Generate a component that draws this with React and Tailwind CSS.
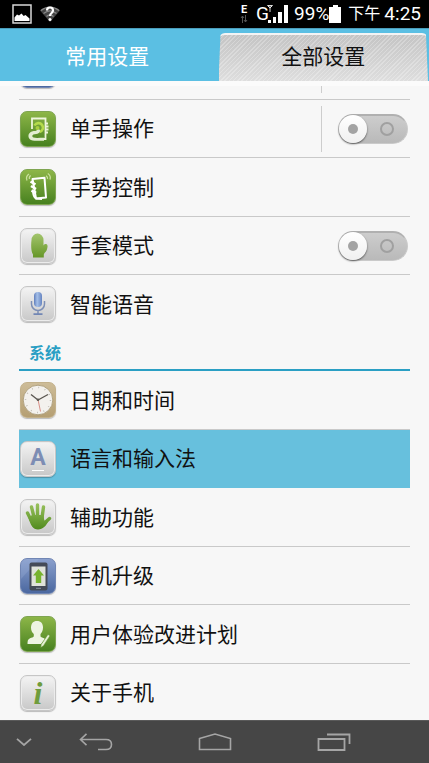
import { useState } from 'react';
import clsx from 'clsx';

const tiles = {
  green: 'bg-linear-to-b from-[#8db648] to-[#47811f] border-[#7fa552]',
  silver: 'bg-linear-to-b from-[#f4f4f4] to-[#c8c8c8] border-[#c6c6c6] inset-ring inset-ring-[#ececec]',
  gold: 'bg-linear-to-b from-[#cdbc98] to-[#b59f73] border-[#c3b18b]',
  blue: 'bg-linear-to-b from-[#8ba0cd] to-[#4b68a0] border-[#7186b4]',
};

function Tile({ tone, children }) {
  return (
    <span
      aria-hidden="true"
      className={clsx(
        'flex size-9 shrink-0 items-center justify-center overflow-hidden rounded-[7px] border shadow-[0_1px_1px_rgba(0,0,0,0.25)]',
        tiles[tone]
      )}
    >
      {children}
    </span>
  );
}

function OneHandIcon() {
  return (
    <svg viewBox="0 0 36 36" className="size-9 shrink-0" fill="none">
      <path d="M12 18V7.5h13.500V28H13" stroke="#eef5dc" strokeWidth="1.8" />
      <path d="M14.500 14.500a4.500 4.500 0 1 1 5 6.500" stroke="#b5db4c" strokeWidth="2.600" />
      <circle cx="17.500" cy="17" r="2" fill="#a9d03f" />
      <path
        d="M19.500 18.500c-1.500-.3-2.500.7-4 1.500-2.500 0-5 .6-6.300 2.500-1.500 2.200-.7 5.300 1.800 6.500 2.500 1 7.500.8 13 .8v-3c-4 0-8 .6-10.500-.2-1.500-.6-1.600-2.300-.2-3 1.700-.7 4-.3 5.500-1.600 1.200-1 1.700-2.600.7-3.500z"
        fill="#e3eed2"
      />
      <path d="M26 12.500h2M26 15.500h2.500M26 18.500h2.500M26 21.500h2" stroke="#eef5dc" strokeWidth="2" />
    </svg>
  );
}

function GestureIcon() {
  return (
    <svg viewBox="0 0 36 36" className="size-9 shrink-0" fill="none">
      <path d="m12.500 10 12-1.200 1.500 19.700-10 1z" stroke="#fff" strokeWidth="2" strokeLinejoin="round" />
      <path d="m10.500 12.500 5 3M11 17l5 3M11.500 21.500l4.500 2.500" stroke="#fff" strokeWidth="2.600" />
      <path d="M13 23c.5 3.500 1.500 5.500 3 6.500l6 .5" stroke="#fff" strokeWidth="2" />
      <path
        d="M9.500 10c-.5-1.500 0-2.700 1.200-3.500M7 11.500C6 9 6.700 6.500 9 5M27.500 10c.4-1.500-.2-2.500-1.500-3.300M30 10.500c.8-2.500 0-4.500-2.200-6"
        stroke="#c9e09c"
        strokeWidth="1.300"
      />
    </svg>
  );
}

function MittenIcon() {
  return (
    <svg viewBox="0 0 36 36" className="size-9 shrink-0">
      <defs>
        <linearGradient id="mitten" x1="0" y1="0" x2="0" y2="1">
          <stop offset="0" stopColor="#a3c56d" />
          <stop offset="1" stopColor="#669628" />
        </linearGradient>
      </defs>
      <path
        d="M11.500 12a6 6.500 0 0 1 12 0v5.500c.5-1.300 1.500-1.800 2.500-1.500 1.500.4 1.700 1.500 1.500 3-.4 2.600-1 4.500-3 6l-.7 1.500v3H13v-3l-1-2C11 21 11 16 11.500 12z"
        fill="url(#mitten)"
      />
    </svg>
  );
}

function MicIcon() {
  return (
    <svg viewBox="0 0 36 36" className="size-9 shrink-0" fill="none">
      <defs>
        <linearGradient id="mic" x1="0" y1="0" x2="1" y2="0">
          <stop offset="0" stopColor="#5f7dbb" />
          <stop offset="0.400" stopColor="#a4bfe8" />
          <stop offset="1" stopColor="#6684c0" />
        </linearGradient>
      </defs>
      <rect x="14" y="6" width="8" height="15" rx="4" fill="url(#mic)" />
      <path d="M11.500 15v3a6.500 6.500 0 0 0 13 0v-3M18 24.500V28" stroke="#7d8fb5" strokeWidth="1.500" />
      <path d="M13.500 28.200h9" stroke="#7186b4" strokeWidth="1.800" />
    </svg>
  );
}

function ClockIcon() {
  return (
    <svg viewBox="0 0 36 36" className="size-9 shrink-0" fill="none">
      <circle cx="18" cy="18" r="14.800" fill="#f3f1ed" stroke="#a5946e" strokeWidth="0.800" />
      <circle cx="18" cy="18" r="12.500" stroke="#b9b5ac" strokeWidth="1.500" strokeDasharray="0.800 5.745" />
      <path d="m20.500 29.500-2.500-12" stroke="#d4837a" strokeWidth="0.900" />
      <path d="m11 12.500 7 5.500 10-5.500" stroke="#5c5852" strokeWidth="1.400" />
      <circle cx="18" cy="17.800" r="1.300" fill="#5c5852" />
    </svg>
  );
}

function HandIcon() {
  return (
    <svg viewBox="0 0 36 36" className="size-9 shrink-0" fill="none">
      <defs>
        <linearGradient id="hand" gradientUnits="userSpaceOnUse" x1="0" y1="4" x2="0" y2="31">
          <stop offset="0" stopColor="#9bc35f" />
          <stop offset="1" stopColor="#4f8a1d" />
        </linearGradient>
      </defs>
      <path
        d="m7.500 14 3.500 7M11.500 8 14 18M17.500 6v12M23.500 8 22 19M29.500 19.500 24.500 24"
        stroke="url(#hand)"
        strokeWidth="3.400"
        strokeLinecap="round"
      />
      <path d="m8.500 19 3.500-3h11.500l.8 5.500 4 .8c-2.300 4.700-5.300 8.200-10.300 8.200s-7.500-4.500-9.500-11.500z" fill="url(#hand)" />
    </svg>
  );
}

function UpgradeIcon() {
  return (
    <svg viewBox="0 0 36 36" className="size-9 shrink-0">
      <path d="M0 0h20L0 22z" fill="#a0b3dc" opacity="0.300" />
      <rect x="9.500" y="4.500" width="18" height="28" rx="2" fill="#444a57" />
      <rect x="11.500" y="8.500" width="14" height="19.500" fill="#dfe2da" />
      <path d="M18.500 11 24 17.500h-2.800V25h-5.400v-7.500H13z" fill="#77b32f" />
      <path d="M16 30.300h5" stroke="#8a92a3" />
    </svg>
  );
}

function UserPlanIcon() {
  return (
    <svg viewBox="0 0 36 36" className="size-9 shrink-0">
      <path
        d="M17 5c4 0 6 2.700 6 6.500 0 3-1 5-2.500 6.500v2.500c1 1 3.500 1.500 4.500 2.500L21 28H7.500c0-3 .3-4.700 2.500-5.700 1.500-.7 3.500-.8 3.800-2V18c-1.800-1.500-2.800-3.500-2.800-6.500C11 7.700 13 5 17 5z"
        fill="#edf4e2"
      />
      <path d="m28 18.500 2 1.200-6.500 10-2.800 1.800.6-3.300z" fill="#e6f1d4" stroke="#5f9130" strokeWidth="0.500" />
    </svg>
  );
}

function LetterIcon() {
  return (
    <span className="flex flex-col items-center font-['Roboto',sans-serif] text-[23px] leading-6 font-bold text-[#7d8db4]">
      A
      <span className="h-px w-3 bg-white" />
    </span>
  );
}

function InfoIcon() {
  return (
    <span className="font-['Liberation_Serif',serif] text-[32px] leading-8 font-bold text-[#6f9c3c] italic">i</span>
  );
}

const deviceItems = [
  { id: 'prev', tone: 'blue' },
  { id: 'onehand', label: '单手操作', tone: 'green', icon: <OneHandIcon />, toggle: true, split: true },
  { id: 'gesture', label: '手势控制', tone: 'green', icon: <GestureIcon /> },
  { id: 'glove', label: '手套模式', tone: 'silver', icon: <MittenIcon />, toggle: true },
  { id: 'voice', label: '智能语音', tone: 'silver', icon: <MicIcon /> },
];

const systemItems = [
  { id: 'date', label: '日期和时间', tone: 'gold', icon: <ClockIcon /> },
  { id: 'language', label: '语言和输入法', tone: 'silver', icon: <LetterIcon />, active: true },
  { id: 'access', label: '辅助功能', tone: 'silver', icon: <HandIcon /> },
  { id: 'upgrade', label: '手机升级', tone: 'blue', icon: <UpgradeIcon /> },
  { id: 'plan', label: '用户体验改进计划', tone: 'green', icon: <UserPlanIcon /> },
  { id: 'about', label: '关于手机', tone: 'silver', icon: <InfoIcon /> },
];

function Toggle({ labelledBy }) {
  const [on, setOn] = useState(false);
  return (
    <span className="relative flex h-[30px] w-[70px] items-center">
      <input
        type="checkbox"
        role="switch"
        aria-labelledby={labelledBy}
        checked={on}
        onChange={(e) => setOn(e.target.checked)}
        className="peer h-[30px] w-[70px] cursor-pointer appearance-none rounded-full border border-t-2 border-[#cacaca] border-t-[#b0b0b0] bg-linear-to-b from-[#cdcdcd] to-[#b9b9b9]"
      />
      {/* knob */}
      <span className="pointer-events-none absolute left-px flex size-7 items-center justify-center rounded-full bg-linear-to-b from-white to-[#f0f0f0] shadow-[0_1px_2px_rgba(0,0,0,0.6)] peer-checked:left-10">
        <span className="size-[10px] rounded-full bg-[#a3a3a3]" />
      </span>
      <span className="pointer-events-none absolute right-[14px] size-[14px] rounded-full border-2 border-[#a0a0a0] peer-checked:right-11" />
    </span>
  );
}

function Row({ item }) {
  return (
    <li
      className={clsx(
        'flex h-[58px] items-center border-b pl-px odd:h-[59px] last:border-transparent',
        item.active ? 'border-[#67c0dd] bg-[#67c0dd]' : 'border-[#c9c9c9]'
      )}
    >
      <a href={`#${item.id}`} className="flex min-w-0 flex-1 items-center gap-[14px]">
        <Tile tone={item.tone}>{item.icon}</Tile>
        <span id={`label-${item.id}`} className="truncate pb-[3px] text-[21px] leading-8 text-[#111]">
          {item.label}
        </span>
      </a>
      {(item.split || item.id === 'prev') && <span className="mr-4 h-[46px] w-px bg-[#cdcdcd]" />}
      {item.toggle && (
        <span className="mr-[2px]">
          <Toggle labelledBy={`label-${item.id}`} />
        </span>
      )}
      {item.id === 'prev' && <span className="w-[72px]" />}
    </li>
  );
}

function StatusBar() {
  return (
    <div className="flex h-7 shrink-0 items-center justify-between bg-black pr-2 pl-3 font-['Roboto','Noto_Sans_CJK_SC',sans-serif] text-white">
      <div className="flex items-center gap-2">
        <svg viewBox="0 0 20 20" className="size-5" fill="none" aria-hidden="true">
          <rect x="1" y="1" width="18" height="18" stroke="#d8d8d8" strokeWidth="1.500" />
          <path d="M2.500 17v-3.500l2.500-3 2 1 2.500-2 2.200 2.500 1.800-1 4 3.500V17z" fill="#fff" />
        </svg>
        <svg viewBox="0 0 20 18" className="h-[18px] w-5" fill="none" aria-hidden="true">
          <path d="M0 5.500C5.500.5 14.500.5 20 5.500L10 17z" fill="#444" />
          <path d="M1 5.500c5.500-4.500 12.500-4.500 18 0M3.500 8.500c4-3.300 9-3.300 13 0M6.500 11.500c2-1.700 5-1.700 7 0" stroke="#888" strokeWidth="1.300" />
          <path d="M7 5.500C7 1.500 13 1.500 13 5.500c0 2.500-3 2.500-3 5.500" stroke="#fff" strokeWidth="2.200" />
          <circle cx="10" cy="14.500" r="1.500" fill="#fff" />
        </svg>
      </div>

      <div className="flex items-center">
        <span className="mr-2 flex flex-col items-center text-[11px] leading-[10px] font-bold">
          E
          <svg viewBox="0 0 8 8" className="size-2" fill="none" stroke="#555" aria-hidden="true">
            <path d="M2.500 8V1M1 3l1.500-2L4 3M5.500 0v7M4 5l1.500 2L7 5" />
          </svg>
        </span>
        <span className="text-[19px] leading-7">G</span>
        <svg viewBox="0 0 22 20" className="mr-[6px] -ml-[3px] h-5 w-[22px]" aria-hidden="true">
          <path d="M2 16h3v3H2zM7 13h3v6H7zM12 8h4v11h-4zM18 1h4v18h-4z" fill="#fff" />
          <path d="M1.500 1.500h5L4 4zM4 2v6" fill="none" stroke="#ddd" />
        </svg>
        <span className="text-[19px] leading-7">99%</span>
        <svg viewBox="0 0 12 18" className="mr-[7px] h-[18px] w-3" aria-hidden="true">
          <path d="M4 0h5v2h3v16H0V2h4z" fill="#fff" />
        </svg>
        <span className="mr-1 text-base leading-7">下午</span>
        <span className="text-[19px] leading-7">4:25</span>
      </div>
    </div>
  );
}

function NavBar() {
  return (
    <nav className="flex h-[43px] shrink-0 border-t border-[#5a5a5a] bg-[#464646] text-[#a5a5a5]">
      <button type="button" aria-label="隐藏" className="flex w-9 items-center justify-end pr-1">
        <svg viewBox="0 0 16 8" className="h-2 w-4" fill="none" stroke="currentColor" strokeWidth="1.800">
          <path d="m1 .8 7 6.200L15 .8" />
        </svg>
      </button>
      <button type="button" aria-label="返回" className="flex flex-1 items-center justify-center">
        <svg viewBox="0 0 34 18" className="h-[18px] w-[34px]" fill="none" stroke="currentColor" strokeWidth="1.600">
          <path d="M7.500.8 1.500 6.500l6 5.700M1.500 6.500H27c3.500 0 5.500 2.200 5.500 5s-2 5-5.500 5h-8" />
        </svg>
      </button>
      <button type="button" aria-label="主页" className="flex flex-1 items-center justify-center">
        <svg viewBox="0 0 34 18" className="h-[18px] w-[34px]" fill="none" stroke="currentColor" strokeWidth="1.600">
          <path d="M1.500 5.500 17 1l15.500 4.500v11h-31z" />
        </svg>
      </button>
      <button type="button" aria-label="最近任务" className="flex flex-1 items-center justify-center">
        <svg viewBox="0 0 34 18" className="h-[18px] w-[34px]" fill="none" stroke="currentColor" strokeWidth="1.800">
          <path d="M1.500 6h26v11h-26zM10 1.500h22.500V11" />
        </svg>
      </button>
      <span className="w-9" />
    </nav>
  );
}

export default function App() {
  return (
    <div className="flex h-screen flex-col overflow-hidden bg-[#f7f7f7] font-['Noto_Sans_CJK_SC',sans-serif]">
      <StatusBar />

      <div
        role="tablist"
        className="flex h-[53px] shrink-0 bg-[#5bbfe3] text-[21px] leading-8 shadow-[inset_0_1px_0_#4a9dbb]"
      >
        <button type="button" role="tab" aria-selected="false" className="w-1/2 pt-px text-white">
          常用设置
        </button>
        <div className="flex w-1/2 pt-[5px] pr-px pl-1">
          <button
            type="button"
            role="tab"
            aria-selected="true"
            className="flex-1 rounded-t-md border-t-2 border-[#f4f4f4] bg-[repeating-linear-gradient(135deg,rgba(255,255,255,0.25)_0px,rgba(255,255,255,0.25)_1px,transparent_1px,transparent_3px),linear-gradient(#c4c4c4,#dedede)] pb-[6px] text-[#111] [clip-path:polygon(1%_0,99%_0,100%_100%,0_100%)]"
          >
            全部设置
          </button>
        </div>
      </div>
      <div className="h-[5px] shrink-0 bg-[#fbfbfb]" />

      <main className="min-h-0 flex-1 overflow-hidden px-[19px]">
        {/* list is scrolled, first row is mostly out of view */}
        <ul className="-mt-[45px]">
          {deviceItems.map((item) => (
            <Row key={item.id} item={item} />
          ))}
        </ul>
        <h2 className="h-[37px] border-b-2 border-[#2a9fc4] pl-[10px] text-base leading-9 font-bold text-[#2a9fc4]">
          系统
        </h2>
        <ul>
          {systemItems.map((item) => (
            <Row key={item.id} item={item} />
          ))}
        </ul>
      </main>

      <NavBar />
    </div>
  );
}
